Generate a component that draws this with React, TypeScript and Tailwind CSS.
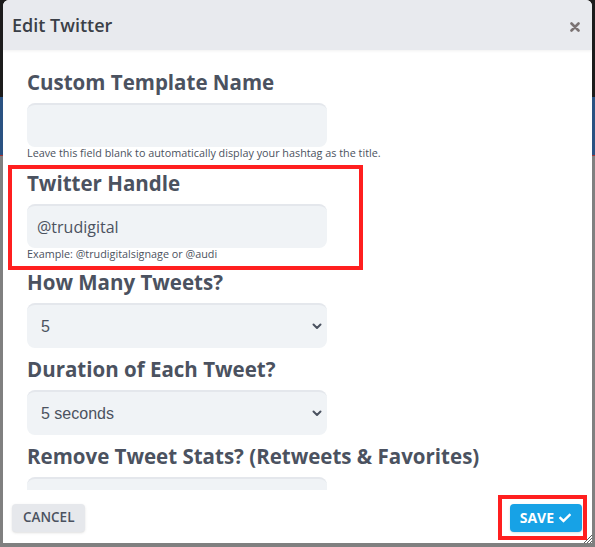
import { FaCheck } from "react-icons/fa";

const font = { fontFamily: "'Open Sans', 'Noto Sans', sans-serif" };

function Chevron() {
  return (
    <svg width="10" height="7" viewBox="0 0 10 7" className="text-[#4b5260]">
      <path d="M1.5 1.5 L5 5 L8.5 1.5" fill="none" stroke="currentColor" strokeWidth="2" strokeLinecap="round" strokeLinejoin="round" />
    </svg>
  );
}

function Field({ children }: { children?: React.ReactNode }) {
  return (
    <div className="mt-[9px] flex h-[44px] w-[300px] items-center rounded-lg border-t-2 border-[#e4e7ec] bg-[#f0f3f6] px-[10px] text-[16px] text-[#4b5260]">
      {children}
    </div>
  );
}

function SelectBox({ value }: { value: string }) {
  return (
    <div
      className="mt-[9px] flex h-[45px] w-[300px] items-center justify-between rounded-lg border-t-2 border-[#e4e7ec] bg-[#f0f3f6] pl-[14px] pr-[5px] text-[16px] text-[#4b5260]"
      style={{ fontFamily: "'Liberation Sans', Arial, sans-serif" }}
    >
      <span>{value}</span>
      <Chevron />
    </div>
  );
}

function Label({ text }: { text: string }) {
  return <p className="text-[20.5px] font-bold leading-[24px] text-[#4b5260]">{text}</p>;
}

export default function App() {
  return (
    <div className="relative h-[547px] w-[595px] overflow-hidden bg-[#808080]" style={font}>
      {/* backdrop page */}
      <div className="h-[97px] bg-[#1c1c1c]" />
      <div className="h-[58px] bg-[#2a5282]" />
      <div className="h-px bg-[#a33]" />

      {/* modal */}
      <div className="absolute left-[3px] top-0 flex h-[543px] w-[589px] flex-col overflow-hidden rounded-t-md bg-white">
        <div className="flex h-[50px] shrink-0 items-center justify-between bg-[#e8eaee] pl-[9px] pr-[12px] shadow-[0_1px_3px_rgba(0,0,0,0.06)]">
          <h2 className="text-[18px] font-semibold text-[#3a3f47]">Edit Twitter</h2>
          <svg width="10" height="10" viewBox="0 0 10 10" className="mt-[4px] text-[#7b7373]">
            <path d="M1.5 1.5 L8.5 8.5 M8.5 1.5 L1.5 8.5" stroke="currentColor" strokeWidth="2.6" strokeLinecap="round" />
          </svg>
        </div>

        <div className="h-[440px] shrink-0 overflow-hidden pl-[24px] pt-[20px]">
          <Label text="Custom Template Name" />
          <Field />
          <p className="mt-[1px] text-[10.8px] leading-[10px] text-[#4b5260]">
            Leave this field blank to automatically display your hashtag as the title.
          </p>

          <div className="mt-[13px]">
            <Label text="Twitter Handle" />
            <Field>@trudigital</Field>
            <p className="mt-[1px] text-[10.8px] leading-[10px] text-[#4b5260]">Example: @trudigitalsignage or @audi</p>
          </div>

          <div className="mt-[11px]">
            <Label text="How Many Tweets?" />
            <SelectBox value="5" />
          </div>

          <div className="mt-[9px]">
            <Label text="Duration of Each Tweet?" />
            <SelectBox value="5 seconds" />
          </div>

          <div className="mt-[9px]">
            <Label text="Remove Tweet Stats? (Retweets & Favorites)" />
            <SelectBox value="" />
          </div>
        </div>

        <div className="flex flex-1 items-center justify-between pl-[9px] pr-[10px] pt-[2px]">
          <button className="h-[28px] rounded bg-[#e6e8ec] px-[11px] text-[13.5px] font-semibold text-[#4b5260] shadow-sm">
            CANCEL
          </button>
          <button className="flex h-[28px] items-center gap-[5px] rounded bg-[#17a2e6] pl-[10px] pr-[11px] text-[14px] font-bold text-white shadow-sm">
            SAVE <FaCheck size={12} />
          </button>
        </div>

        {/* resize grip */}
        <svg width="10" height="10" viewBox="0 0 10 10" className="absolute bottom-0 right-0 text-[#333]">
          <path d="M2 10 L10 2 M5 10 L10 5 M8 10 L10 8" stroke="currentColor" strokeWidth="0.8" />
        </svg>
      </div>

      {/* annotation boxes */}
      <div className="pointer-events-none absolute left-[8px] top-[165px] h-[105px] w-[355px] border-[4px] border-[#ff1f1f]" />
      <div className="pointer-events-none absolute left-[498px] top-[495px] h-[45px] w-[89px] border-[4px] border-[#ff1f1f]" />
    </div>
  );
}
